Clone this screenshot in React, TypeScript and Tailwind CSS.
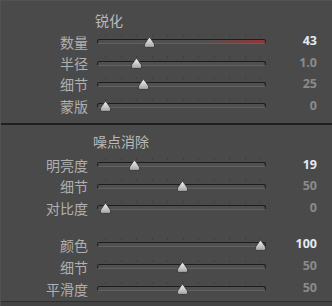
import React from 'react'

// ── Data ─────────────────────────────────────────────────────────────────────
type Row = { label: string; value: string; pct: number; hot?: boolean; red?: boolean }

const sharpen: Row[] = [
  { label: '数量', value: '43',  pct: 43 / 150, hot: true, red: true },
  { label: '半径', value: '1.0', pct: 0.2 },
  { label: '细节', value: '25',  pct: 0.25 },
  { label: '蒙版', value: '0',   pct: 0 },
]

const luminance: Row[] = [
  { label: '明亮度', value: '19', pct: 0.19, hot: true },
  { label: '细节',   value: '50', pct: 0.5 },
  { label: '对比度', value: '0',  pct: 0 },
]

const color: Row[] = [
  { label: '颜色',   value: '100', pct: 1, hot: true },
  { label: '细节',   value: '50',  pct: 0.5 },
  { label: '平滑度', value: '50',  pct: 0.5 },
]

const ticks = Array.from({ length: 11 }, (_, i) => 8 + i * 15.5)

// ── Sub-components ────────────────────────────────────────────────────────────
function Thumb() {
  return (
    <svg width="13" height="11" viewBox="0 0 13 11" className="block">
      <defs>
        <linearGradient id="tg" x1="0" y1="0" x2="0" y2="1">
          <stop offset="0" stopColor="#f2f2f2" />
          <stop offset="1" stopColor="#a2a2a2" />
        </linearGradient>
      </defs>
      <path d="M6.5 0.6 Q7.3 0.6 8 2 L11.2 6.6 Q12.6 10.4 9.6 10.4 L3.4 10.4 Q0.4 10.4 1.8 6.6 L5 2 Q5.7 0.6 6.5 0.6 Z" fill="url(#tg)" stroke="#2b2b2b" strokeWidth="0.8" />
    </svg>
  )
}

function Slider({ row, h }: { row: Row; h: string }) {
  return (
    <div className={`flex items-center ${h}`}>
      <div className="w-[87px] text-right text-[14px] leading-none text-[#b0b0b0]">{row.label}</div>
      <div className="relative ml-[9px] w-[169px] h-full">
        {ticks.map(t => (
          <div key={t} className="absolute w-px h-[2px] bg-[#3d3d3d] top-[calc(50%-7px)]" style={{ left: t }} />
        ))}
        <div className="absolute left-0 right-0 top-[calc(50%-2.5px)] h-[5px] rounded-full bg-[#505050] border border-[#1d1d1d] border-b-[#626262] overflow-hidden">
          {row.red && <div className="absolute right-0 top-0 bottom-0 w-[60px] bg-gradient-to-r from-transparent to-[#963434]" />}
        </div>
        <div className="absolute top-[calc(50%-5px)]" style={{ left: 8 + row.pct * 155 - 6.5 }}>
          <Thumb />
        </div>
      </div>
      <div
        className={`w-[51px] text-right text-[12.5px] leading-none font-bold ${row.hot ? 'text-[#e4e9f0]' : 'text-[#8a8a8a]'}`}
        style={{ fontFamily: '"Open Sans", "Liberation Sans", sans-serif' }}
      >
        {row.value}
      </div>
    </div>
  )
}

// ── Page ──────────────────────────────────────────────────────────────────────
export default function App() {
  return (
    <div
      className="w-[332px] h-[306px] bg-[#4a4a4a] border-l border-t border-[#525252] overflow-hidden flex flex-col"
      style={{ fontFamily: '"Noto Sans CJK SC", "Noto Sans", sans-serif' }}
    >
      {/* 锐化 */}
      <div className="h-[122px] pt-[9px]">
        <div className="h-[20px] flex items-center pl-[94px] text-[14px] text-[#bababa]">锐化</div>
        <div className="mt-[1px]">
          {sharpen.map(r => <Slider key={r.label} row={r} h="h-[21.4px]" />)}
        </div>
      </div>

      <div className="h-[2px] bg-[#1f1f1f]" />

      {/* 噪点消除 */}
      <div className="pt-[6px]">
        <div className="h-[20px] flex items-center pl-[92px] text-[14px] text-[#bababa]">噪点消除</div>
        <div className="mt-[3px]">
          {luminance.map(r => <Slider key={r.label} row={r} h="h-[21.5px]" />)}
        </div>
        <div className="mt-[15px]">
          {color.map(r => <Slider key={r.label} row={r} h="h-[22px]" />)}
        </div>
      </div>

      <div className="mt-auto h-px bg-[#2e2e2e]" />
      <div className="h-[4px] bg-[#434343]" />
    </div>
  )
}
